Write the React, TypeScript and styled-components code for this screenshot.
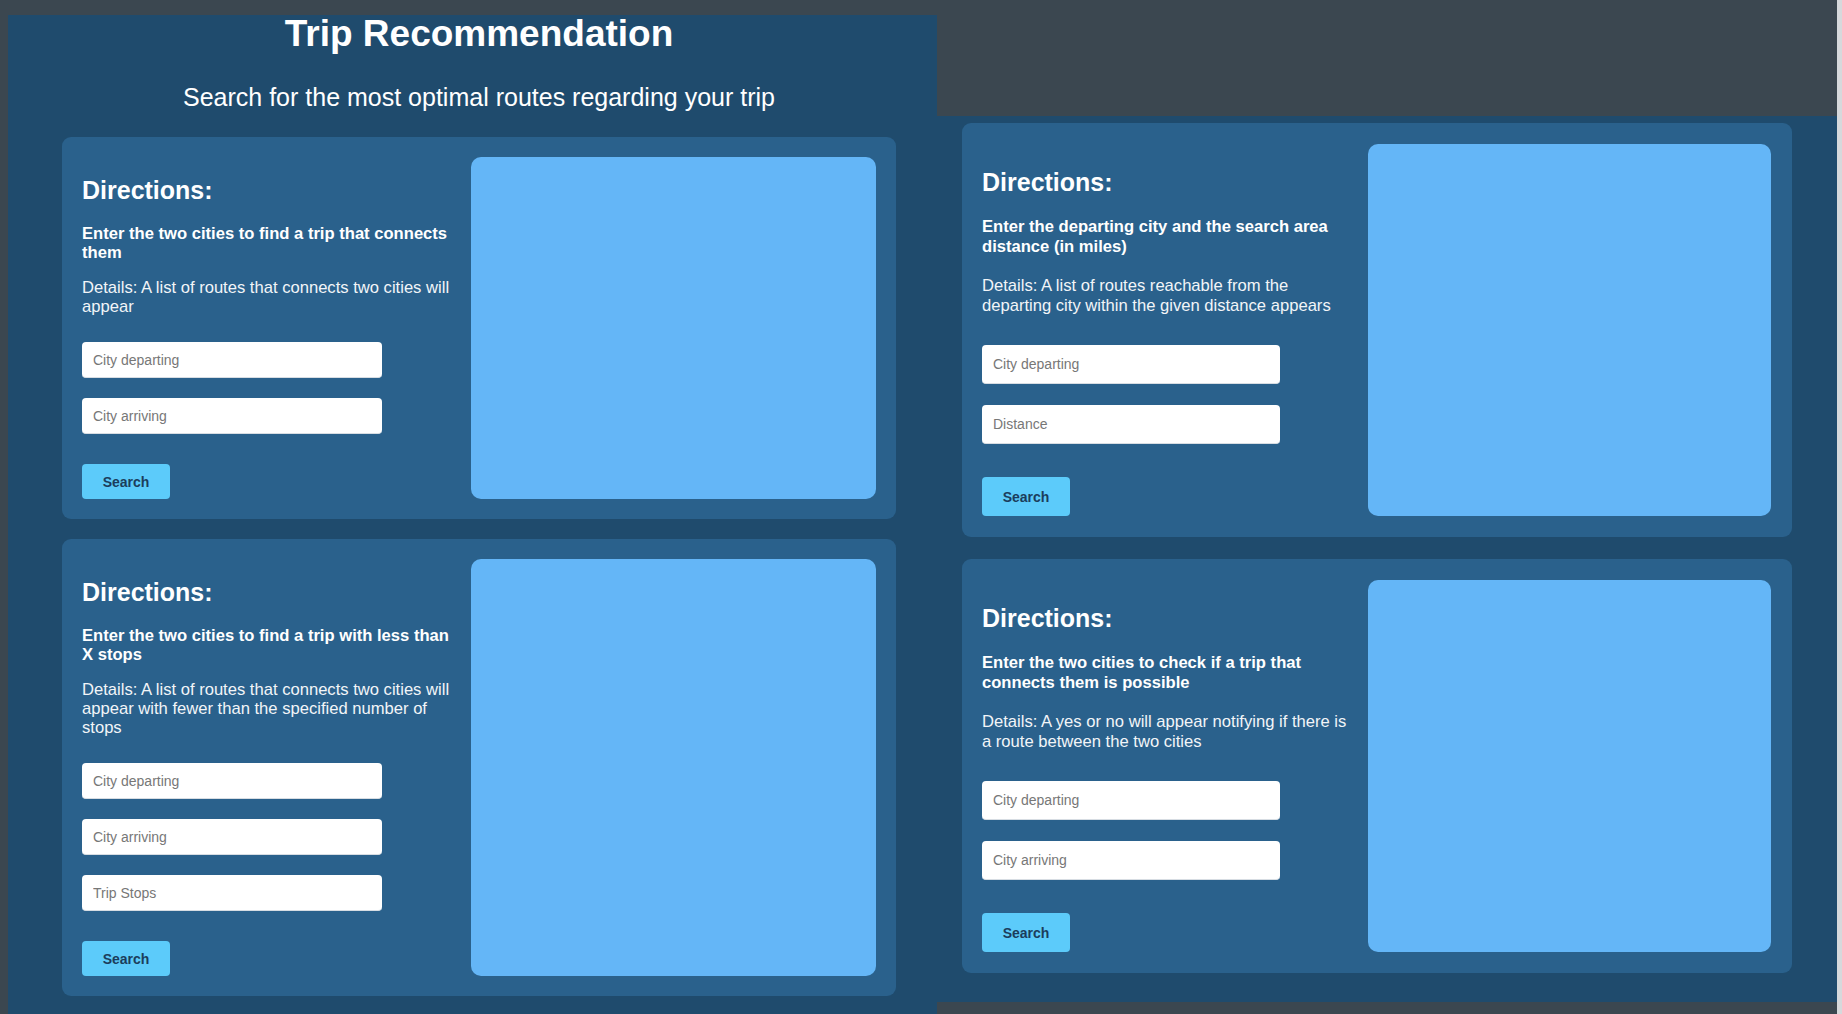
import React from "react";
import styled, { createGlobalStyle } from "styled-components";

// spacing differs a little between the two halves of the page
interface Metrics {
  padTop: number;
  padBottom: number;
  padRight: number;
  colWidth: number;
  headTop: number;
  headLine: number;
  textLine: number;
  leadGap: number;
  detailsGap: number;
  fieldsGap: number;
  fieldH: number;
  fieldW: number;
  fieldGap: number;
  buttonGap: number;
  buttonH: number;
}

const leftMetrics: Metrics = {
  padTop: 20,
  padBottom: 20,
  padRight: 20,
  colWidth: 375,
  headTop: 19,
  headLine: 28,
  textLine: 19,
  leadGap: 20,
  detailsGap: 16,
  fieldsGap: 26,
  fieldH: 36,
  fieldW: 300,
  fieldGap: 20,
  buttonGap: 30,
  buttonH: 35,
};

const rightMetrics: Metrics = {
  padTop: 21,
  padBottom: 21,
  padRight: 21,
  colWidth: 372,
  headTop: 23,
  headLine: 30,
  textLine: 20,
  leadGap: 20,
  detailsGap: 19,
  fieldsGap: 29,
  fieldH: 39,
  fieldW: 298,
  fieldGap: 21,
  buttonGap: 33,
  buttonH: 39,
};

const GlobalStyle = createGlobalStyle`
  html, body {
    margin: 0;
    padding: 0;
    background: #3b4750;
  }
  body {
    font-family: "Liberation Sans", Arial, sans-serif;
    overflow: hidden;
  }
  * {
    box-sizing: border-box;
  }
`;

const Page = styled.div`
  width: 1842px;
  height: 1014px;
  display: flex;
  align-items: flex-start;
  background: #3b4750;
`;

const LeftPanel = styled.section`
  margin-left: 8px;
  margin-top: 15px;
  width: 929px;
  height: 999px;
  padding: 0 41px 0 54px;
  background: #1f4b6d;
  display: flex;
  flex-direction: column;
`;

const RightPanel = styled.section`
  margin-top: 116px;
  width: 900px;
  height: 886px;
  padding: 7px 45px 0 25px;
  background: #1f4b6d;
  display: flex;
  flex-direction: column;
  gap: 22px;
`;

const EdgeStrip = styled.div`
  width: 5px;
  height: 1014px;
  background: #d6d9dc;
`;

const Title = styled.h1`
  margin: 0;
  font-size: 37px;
  line-height: 37px;
  font-weight: 700;
  color: #ffffff;
  text-align: center;
`;

const Subtitle = styled.p`
  margin: 31px 0 25px;
  font-size: 25px;
  line-height: 29px;
  color: #ffffff;
  text-align: center;
`;

const CardStack = styled.div`
  display: flex;
  flex-direction: column;
  gap: 20px;
`;

const Card = styled.div<{ $m: Metrics }>`
  display: grid;
  grid-template-columns: ${(p) => p.$m.colWidth}px 1fr;
  column-gap: 14px;
  padding: ${(p) => `${p.$m.padTop}px ${p.$m.padRight}px ${p.$m.padBottom}px 20px`};
  background: #2a618c;
  border-radius: 9px;
`;

const FormColumn = styled.div`
  display: flex;
  flex-direction: column;
  align-items: flex-start;
`;

const Heading = styled.h2<{ $m: Metrics }>`
  margin: ${(p) => p.$m.headTop}px 0 0;
  font-size: 25px;
  line-height: ${(p) => p.$m.headLine}px;
  font-weight: 700;
  color: #ffffff;
`;

const Lead = styled.p<{ $m: Metrics }>`
  margin: ${(p) => p.$m.leadGap}px 0 0;
  font-size: 16.6px;
  line-height: ${(p) => p.$m.textLine}px;
  font-weight: 700;
  color: #ffffff;
`;

const Details = styled.p<{ $m: Metrics }>`
  margin: ${(p) => p.$m.detailsGap}px 0 0;
  font-size: 16.6px;
  line-height: ${(p) => p.$m.textLine}px;
  color: #f2f5f8;
`;

const Fields = styled.div<{ $m: Metrics }>`
  margin-top: ${(p) => p.$m.fieldsGap}px;
  display: flex;
  flex-direction: column;
  gap: ${(p) => p.$m.fieldGap}px;
`;

const Field = styled.input<{ $m: Metrics }>`
  width: ${(p) => p.$m.fieldW}px;
  height: ${(p) => p.$m.fieldH}px;
  padding: 0 11px;
  border: none;
  border-bottom: 1px solid #d7dde3;
  border-radius: 4px;
  background: #ffffff;
  font-family: "Liberation Sans", Arial, sans-serif;
  font-size: 14px;
  color: #333333;
  outline: none;

  &::placeholder {
    color: #777777;
  }
`;

const SearchButton = styled.button<{ $m: Metrics }>`
  margin-top: ${(p) => p.$m.buttonGap}px;
  width: 88px;
  height: ${(p) => p.$m.buttonH}px;
  border: none;
  border-radius: 4px;
  background: #5ccbfa;
  color: #1b3d5c;
  font-family: "Liberation Sans", Arial, sans-serif;
  font-size: 14px;
  font-weight: 700;
  cursor: pointer;
`;

const MapArea = styled.div`
  background: #64b6f7;
  border-radius: 10px;
`;

interface TripCardProps {
  metrics: Metrics;
  lead: string;
  details: string;
  fields: string[];
}

const TripCard: React.FC<TripCardProps> = ({ metrics, lead, details, fields }) => (
  <Card $m={metrics}>
    <FormColumn>
      <Heading $m={metrics}>Directions:</Heading>
      <Lead $m={metrics}>{lead}</Lead>
      <Details $m={metrics}>{details}</Details>
      <Fields $m={metrics}>
        {fields.map((f) => (
          <Field key={f} $m={metrics} type="text" placeholder={f} />
        ))}
      </Fields>
      <SearchButton $m={metrics}>Search</SearchButton>
    </FormColumn>
    <MapArea />
  </Card>
);

export default function App() {
  return (
    <>
      <GlobalStyle />
      <Page>
        <LeftPanel>
          <Title>Trip Recommendation</Title>
          <Subtitle>Search for the most optimal routes regarding your trip</Subtitle>
          <CardStack>
            <TripCard
              metrics={leftMetrics}
              lead="Enter the two cities to find a trip that connects them"
              details="Details: A list of routes that connects two cities will appear"
              fields={["City departing", "City arriving"]}
            />
            <TripCard
              metrics={leftMetrics}
              lead="Enter the two cities to find a trip with less than X stops"
              details="Details: A list of routes that connects two cities will appear with fewer than the specified number of stops"
              fields={["City departing", "City arriving", "Trip Stops"]}
            />
          </CardStack>
        </LeftPanel>
        <RightPanel>
          <TripCard
            metrics={rightMetrics}
            lead="Enter the departing city and the search area distance (in miles)"
            details="Details: A list of routes reachable from the departing city within the given distance appears"
            fields={["City departing", "Distance"]}
          />
          <TripCard
            metrics={rightMetrics}
            lead="Enter the two cities to check if a trip that connects them is possible"
            details="Details: A yes or no will appear notifying if there is a route between the two cities"
            fields={["City departing", "City arriving"]}
          />
        </RightPanel>
        <EdgeStrip />
      </Page>
    </>
  );
}
